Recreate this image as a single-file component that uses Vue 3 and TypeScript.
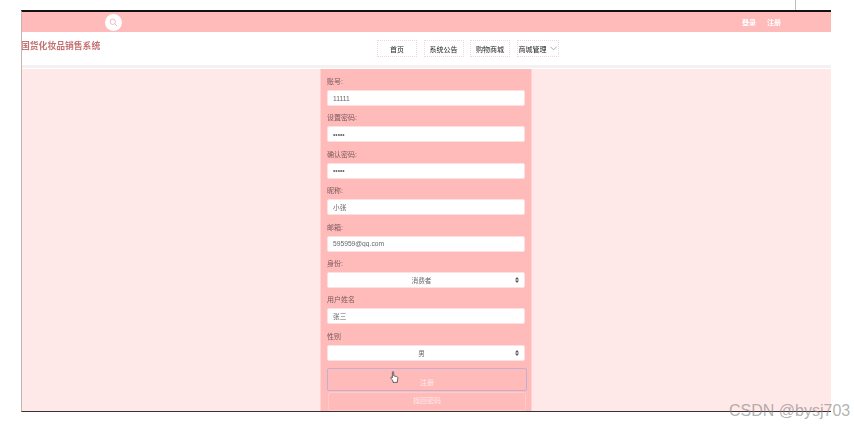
<script setup lang="ts">
interface Field { label: string; type: 'text' | 'password' | 'select'; value: string }
const fields: Field[] = [
  { label: '账号:', type: 'text', value: '11111' },
  { label: '设置密码:', type: 'password', value: '11111' },
  { label: '确认密码:', type: 'password', value: '11111' },
  { label: '昵称:', type: 'text', value: '小张' },
  { label: '邮箱:', type: 'text', value: '595959@qq.com' },
  { label: '身份:', type: 'select', value: '消费者' },
  { label: '用户姓名', type: 'text', value: '张三' },
  { label: '性别', type: 'select', value: '男' },
]
const navs = ['首页', '系统公告', '购物商城']
</script>

<template>
  <div class="page">
    <div class="top-gap"><i class="tick"></i></div>
    <div class="window">
      <div class="topbar">
        <div class="search">
          <svg width="9" height="9" viewBox="0 0 12 12" fill="none" stroke="#f3b6b6" stroke-width="1.3">
            <circle cx="5" cy="5" r="3.6" />
            <path d="M7.8 7.8 11 11" />
          </svg>
        </div>
        <div class="auth"><span>登录</span><span>注册</span></div>
      </div>
      <div class="header">
        <div class="title">国货化妆品销售系统</div>
        <nav class="nav">
          <a v-for="n in navs" :key="n" class="nav-item">{{ n }}</a>
          <a class="nav-item nav-drop">商城管理
            <svg width="7" height="5" viewBox="0 0 8 5" fill="none" stroke="#888" stroke-width="0.8"><path d="M.5.5 4 4 7.5.5" /></svg>
          </a>
        </nav>
      </div>
      <div class="strip"></div>
      <main class="content">
        <form class="form" @submit.prevent>
          <div v-for="f in fields" :key="f.label" class="row">
            <label class="label">{{ f.label }}</label>
            <div v-if="f.type === 'select'" class="control select">
              <span>{{ f.value }}</span>
              <svg class="updown" width="4" height="6" viewBox="0 0 4 6" fill="#555"><path d="M2 0 4 2.4H0zM2 6 0 3.6h4z" /></svg>
            </div>
            <input v-else class="control" :type="f.type" :value="f.value" />
          </div>
          <button class="btn btn-main" type="button">注册</button>
          <button class="btn btn-sub" type="button">找回密码</button>
          <svg class="cursor" width="9" height="12" viewBox="0 0 9 12">
            <path d="M2.4 1.2c0-.8 1.3-.8 1.3 0v3.6l3 .8c1 .3 1.3 1 1.1 2L7.4 10v1.4H3V10L.9 7.2c-.5-.8.4-1.5 1.1-.8l.4.5z" fill="#fff" stroke="#444" stroke-width=".8" />
          </svg>
        </form>
      </main>
    </div>
    <div class="watermark">CSDN @bysj703</div>
  </div>
</template>

<style>
html, body { margin: 0; background: #fff; }
</style>

<style scoped>
.page {
  position: relative;
  width: 854px;
  height: 426px;
  overflow: hidden;
  background: #fff;
  font-family: "Liberation Sans", "Noto Sans CJK SC", sans-serif;
}
.top-gap { height: 10px; padding-left: 795px; }
.tick { display: block; width: 1px; height: 10px; background: #bdbdbd; }
.window {
  margin-left: 21px;
  width: 810px;
  height: 402px;
  box-sizing: border-box;
  border-top: 2px solid #111;
  border-bottom: 1px solid #3a3033;
  border-left: 1px solid #c4b4b4;
  overflow: hidden;
  display: flex;
  flex-direction: column;
}
.topbar {
  height: 20px;
  flex: none;
  background: #ffbaba;
  display: flex;
  align-items: center;
}
.search {
  width: 17px;
  height: 17px;
  margin-left: 83px;
  border-radius: 50%;
  background: #fff;
  display: flex;
  align-items: center;
  justify-content: center;
  filter: blur(.4px);
}
.auth {
  margin-left: auto;
  margin-right: 50px;
  display: flex;
  gap: 11px;
  color: #fff;
  font-size: 7px;
  font-weight: 700;
  filter: blur(.4px);
}
.header {
  height: 33px;
  flex: none;
  background: #fff;
  position: relative;
  display: flex;
  padding: 8px 0 0 355px;
  box-sizing: border-box;
}
.title {
  position: absolute;
  left: -1px;
  top: 8px;
  font-size: 8.8px;
  line-height: 12px;
  font-weight: 700;
  color: #c47272;
  filter: blur(.4px);
}
.nav {
  display: flex;
  gap: 6.5px;
  height: 17px;
}
.nav-item {
  width: 40px;
  box-sizing: border-box;
  border: 1px dotted #f3d6d8;
  display: flex;
  align-items: center;
  justify-content: center;
  gap: 3px;
  font-size: 7px;
  color: #222;
  filter: blur(.3px);
}
.nav-drop { width: 42px; }
.strip { height: 4px; flex: none; background: #f3f1f1; border-bottom: 1px solid #fff; box-sizing: border-box; }
.content {
  flex: 1;
  min-height: 0;
  background: #ffe8e8;
  display: flex;
  justify-content: center;
}
.form {
  position: relative;
  width: 212px;
  box-sizing: border-box;
  padding: 6px 6px 0;
  margin-left: -1px;
  background: #ffbaba;
  border-left: 1px solid #ffd3d3;
  border-right: 1px solid #ffd3d3;
}
.row { height: 36.4px; display: flex; flex-direction: column; }
.label {
  height: 15px;
  padding-top: 1px;
  box-sizing: border-box;
  line-height: 12px;
  font-size: 7px;
  color: #7a5a5c;
  filter: blur(.4px);
}
.control {
  height: 16px;
  width: 198px;
  flex: none;
  box-sizing: border-box;
  border: 1px solid #ffe0e0;
  border-radius: 2px;
  background: #fff;
  padding: 0 5px;
  font: 6.7px "Liberation Sans", "Noto Sans CJK SC", sans-serif;
  color: #666;
  outline: none;
  filter: blur(.35px);
}
.select {
  position: relative;
  display: flex;
  align-items: center;
  justify-content: center;
  padding-right: 14px;
}
.updown { position: absolute; right: 5px; top: 4px; }
.btn {
  display: block;
  box-sizing: border-box;
  font: 7px "Liberation Sans", "Noto Sans CJK SC", sans-serif;
  color: #ffe9e9;
  background: #ffbaba;
  border-radius: 2px;
}
.btn-main {
  margin-top: 2px;
  width: 200px;
  height: 23px;
  border: 1px solid #c3aed0;
  padding: 5px 0 0;
}
.btn-sub {
  margin-top: 1px;
  width: 198px;
  height: 19px;
  margin-left: 1px;
  border: 1px solid #ffcaca;
  padding: 0 0 3px;
}
.cursor { position: absolute; left: 69px; top: 302px; }
.watermark {
  position: absolute;
  left: 729px;
  top: 402px;
  font-size: 16px;
  line-height: 18px;
  color: rgba(130, 130, 130, .62);
  white-space: nowrap;
}
</style>
